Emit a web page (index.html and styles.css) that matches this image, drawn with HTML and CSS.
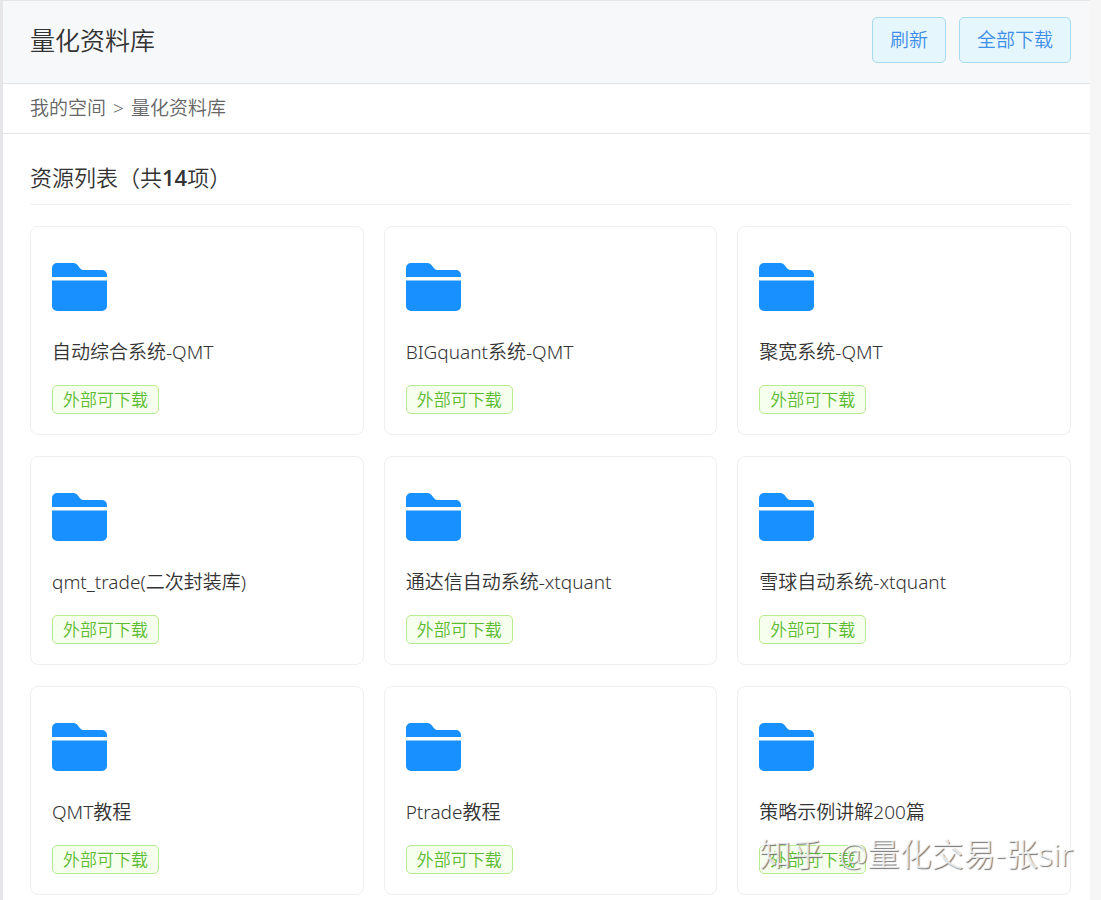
FILE: index.html
```html
<!DOCTYPE html>
<html lang="zh-CN">
<head>
<meta charset="utf-8">
<title>量化资料库</title>
<link rel="stylesheet" href="styles.css">
</head>
<body>
<svg class="sprite" aria-hidden="true">
  <symbol id="folder" viewBox="0 0 56 48">
    <path d="M0 14V5a5 5 0 0 1 5-5h16.500a5 5 0 0 1 3.800 1.700L28 5.200Q29.500 7 31 7h19a5 5 0 0 1 5 5v2zM0 17.500h55V43a5 5 0 0 1-5 5H5a5 5 0 0 1-5-5z"/>
  </symbol>
</svg>
<div class="page">
  <header class="topbar">
    <h1 class="title">量化资料库</h1>
    <div class="actions">
      <button class="btn" type="button">刷新</button>
      <button class="btn" type="button">全部下载</button>
    </div>
  </header>
  <nav class="crumbs"><a class="crumb" href="#">我的空间</a><span>&gt;</span><span>量化资料库</span></nav>
  <main class="content">
    <h2 class="heading">资源列表（共<b>14</b>项）</h2>
    <ul class="grid">
      <li class="card"><svg class="icon"><use href="#folder"/></svg><span class="name">自动综合系统-QMT</span><span class="tag">外部可下载</span></li>
      <li class="card"><svg class="icon"><use href="#folder"/></svg><span class="name">BIGquant系统-QMT</span><span class="tag">外部可下载</span></li>
      <li class="card"><svg class="icon"><use href="#folder"/></svg><span class="name">聚宽系统-QMT</span><span class="tag">外部可下载</span></li>
      <li class="card"><svg class="icon"><use href="#folder"/></svg><span class="name">qmt_trade(二次封装库)</span><span class="tag">外部可下载</span></li>
      <li class="card"><svg class="icon"><use href="#folder"/></svg><span class="name">通达信自动系统-xtquant</span><span class="tag">外部可下载</span></li>
      <li class="card"><svg class="icon"><use href="#folder"/></svg><span class="name">雪球自动系统-xtquant</span><span class="tag">外部可下载</span></li>
      <li class="card"><svg class="icon"><use href="#folder"/></svg><span class="name">QMT教程</span><span class="tag">外部可下载</span></li>
      <li class="card"><svg class="icon"><use href="#folder"/></svg><span class="name">Ptrade教程</span><span class="tag">外部可下载</span></li>
      <li class="card"><svg class="icon"><use href="#folder"/></svg><span class="name">策略示例讲解200篇</span><span class="tag">外部可下载</span></li>
    </ul>
  </main>
</div>
<div class="watermark"><span>知乎</span><span>@量化交易-张sir</span></div>
</body>
</html>
```
FILE: styles.css
```css
* { box-sizing: border-box; }
body {
  margin: 0;
  padding: 1px 11px 0 3px;
  min-height: 100vh;
  background: linear-gradient(90deg, #e6e6e8 3px, #f6f6f7 3px);
  color: #333;
  font-family: "Noto Sans", "Noto Sans CJK SC", sans-serif;
  font-size: 19px;
  font-weight: 350;
}
.sprite { position: absolute; width: 0; height: 0; }
.page { background: #fff; min-height: calc(100vh - 1px); box-shadow: 0 -1px #e6e6e8; }
.topbar {
  display: flex;
  align-items: center;
  justify-content: space-between;
  padding: 16px 19px 20px 27px;
  background: #f7f8fa;
  border-bottom: 1px solid #e2e3e5;
}
.title { margin: 0; font-size: 25px; font-weight: 350; line-height: 46px; }
.actions { display: flex; gap: 13px; }
.btn {
  padding: 0 17px;
  border: 1px solid #a5dcef;
  border-radius: 5px;
  background: #e6f6fd;
  color: #3d8ee8;
  font: inherit;
  line-height: 44px;
}
.crumbs {
  display: flex;
  gap: 7px;
  padding: 0 27px;
  border-bottom: 1px solid #e5e5e7;
  color: #666;
  line-height: 49px;
}
.crumb { color: inherit; text-decoration: none; }
.content { padding: 27px 19px 20px 27px; }
.heading {
  margin: 0 0 21px;
  padding-bottom: 10px;
  border-bottom: 1px solid #f0f0f0;
  font-size: 22px;
  font-weight: 350;
  line-height: 33px;
}
.heading b { font-family: "Open Sans", sans-serif; font-weight: 600; }
.grid {
  display: grid;
  grid-template-columns: repeat(3, 1fr);
  gap: 21px 20px;
  margin: 0;
  padding: 0;
  list-style: none;
}
.card {
  display: flex;
  flex-direction: column;
  align-items: flex-start;
  padding: 36px 21px 20px;
  border: 1px solid #efefef;
  border-radius: 8px;
}
.icon { width: 56px; height: 48px; margin-bottom: 26px; fill: #1890ff; }
.name { margin-bottom: 18px; line-height: 30px; }
.tag {
  padding: 0 10px;
  border: 1px solid #b7eb8f;
  border-radius: 5px;
  background: #f6ffed;
  color: #5dbb33;
  font-size: 17px;
  line-height: 27px;
}
.watermark {
  position: absolute;
  display: flex;
  gap: 16px;
  right: 28px;
  top: 832px;
  color: rgba(255, 255, 255, 0.8);
  font-size: 32px;
  line-height: 44px;
  text-shadow: 1px 1px 1px #777;
  pointer-events: none;
}
```
